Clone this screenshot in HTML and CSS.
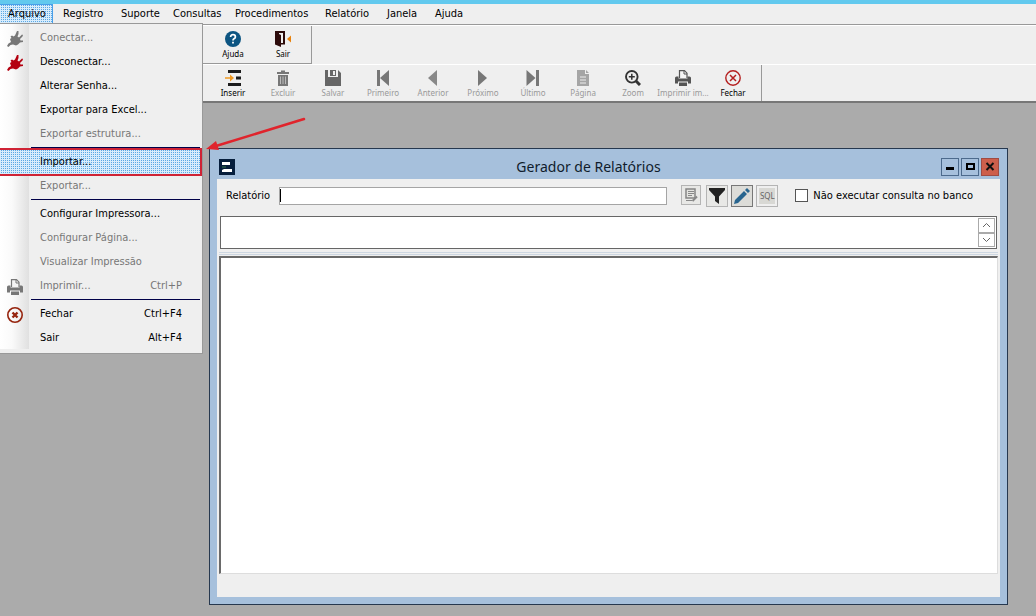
FILE: index.html
```html
<!DOCTYPE html>
<html lang="pt-BR">
<head>
<meta charset="utf-8">
<title>Gerador de Relatórios</title>
<link rel="stylesheet" href="styles.css">
</head>
<body>
<svg class="defs" aria-hidden="true">
  <symbol id="plug" viewBox="0 0 16 16"><path d="M0 15L1.500 12.500L4 11L3 8L4.500 7L3.500 5.500L5 4.500L6.500 5.500L8 4.500L10 0H11.500V3L10.500 5.500L12 6.500L15 3.500L16 4L15.500 5.500L13 8L13.500 9.500H16V11L13 11.500L11 13.500L9 14.500L6 13.500L3.500 14L1.500 16Z" fill="currentColor"/></symbol>
  <symbol id="printer" viewBox="0 0 16 16"><path d="M4.500 8V.7H9.500L12 3.200V8" fill="#f4f4f4" stroke="currentColor" stroke-width="1.200"/><path d="M9 1V4H12" fill="none" stroke="currentColor"/><path d="M0 8Q0 6.500 1.500 6.500H3.500V8.500H12.500V6.500H14.500Q16 6.500 16 8V13.500H13V11.500H3V13.500H0ZM4 12.500H12V16H4Z" fill="currentColor"/></symbol>
  <symbol id="close" viewBox="0 0 16 16"><circle cx="8" cy="8" r="7.200" fill="none" stroke="currentColor" stroke-width="1.400"/><path d="M5 5L11 11M11 5L5 11" stroke="currentColor" stroke-width="1.500"/></symbol>
  <symbol id="close-bold" viewBox="0 0 16 16"><circle cx="8" cy="8" r="7.200" fill="none" stroke="currentColor" stroke-width="1.600"/><path d="M5.500 5.500L10.500 10.500M10.500 5.500L5.500 10.500" stroke="currentColor" stroke-width="2.400"/></symbol>
</svg>

<div class="app">
  <div class="strip"></div>
  <nav class="menubar">
    <button class="menu active">Arquivo</button>
    <button class="menu">Registro</button>
    <button class="menu">Suporte</button>
    <button class="menu">Consultas</button>
    <button class="menu">Procedimentos</button>
    <button class="menu">Relatório</button>
    <button class="menu">Janela</button>
    <button class="menu">Ajuda</button>
  </nav>

  <div class="toolbar-row">
    <div class="toolbar boxed">
      <button class="tool"><svg viewBox="0 0 16 16"><circle cx="8" cy="8" r="8" fill="#0d5582"/><path d="M5.600 6Q5.600 3.700 8 3.700T10.400 6Q10.400 7 9 7.800Q8 8.400 8 9.600" fill="none" stroke="#fff" stroke-width="1.700"/><path d="M7.100 10.800H8.900V12.500H7.100Z" fill="#fff"/></svg><span>Ajuda</span></button>
      <button class="tool"><svg viewBox="0 0 16 16"><path d="M0 0H10V13.500H6V16L0 13.500Z" fill="#2c0b0b"/><path d="M4 2H8V12H6V4L4 3Z" fill="#efefef"/><path d="M16 4.500V11.500L12 8Z" fill="#e8820c"/></svg><span>Sair</span></button>
    </div>
  </div>
  <div class="toolbar-row">
    <div class="toolbar">
      <button class="tool"><svg viewBox="0 0 16 16"><path d="M3 0H16V3H3ZM11 6.500H16V9.500H11ZM3 13H16V16H3Z" fill="#1c1c1c"/><path d="M0 7.200H5V4.500L9 8L5 11.500V8.800H0Z" fill="#f09a24"/></svg><span>Inserir</span></button>
      <button class="tool" disabled><svg viewBox="0 0 16 16"><path d="M2 2H6V.5H10V2H14V4H2ZM3 5H13V16H3Z" fill="#777"/><path d="M5.500 6.500V14M8 6.500V14M10.500 6.500V14" stroke="#bbb" stroke-width="1"/></svg><span>Excluir</span></button>
      <button class="tool" disabled><svg viewBox="0 0 16 16"><path d="M0 0H3V7H13V0L16 3V16H0ZM5 0H11V6H5Z" fill="#666"/><path d="M8 1H10V5H8Z" fill="#eee"/></svg><span>Salvar</span></button>
      <button class="tool" disabled><svg viewBox="0 0 16 16"><path d="M2 0H5V16H2ZM14 0V16L5 8Z" fill="#777"/></svg><span>Primeiro</span></button>
      <button class="tool" disabled><svg viewBox="0 0 16 16"><path d="M12 0V16L3 8Z" fill="#888"/></svg><span>Anterior</span></button>
      <button class="tool" disabled><svg viewBox="0 0 16 16"><path d="M3 0V16L12 8Z" fill="#777"/></svg><span>Próximo</span></button>
      <button class="tool" disabled><svg viewBox="0 0 16 16"><path d="M1.500 0V16L10.500 8ZM11 0H14V16H11Z" fill="#777"/></svg><span>Último</span></button>
      <button class="tool" disabled><svg viewBox="0 0 16 16"><path d="M2 0H10V4H14V16H2ZM11 0L14 3H11Z" fill="#a5a5a5"/><path d="M5 7H11M5 10H11M5 13H11" stroke="#eee" stroke-width="1.200"/></svg><span>Página</span></button>
      <button class="tool" disabled><svg viewBox="0 0 16 16"><circle cx="6.800" cy="6.800" r="5.800" fill="none" stroke="#333" stroke-width="1.900"/><path d="M3.800 6.800H9.800M6.800 3.800V9.800" stroke="#333" stroke-width="1.500"/><path d="M11 11L15 15" stroke="#333" stroke-width="3"/></svg><span>Zoom</span></button>
      <button class="tool" disabled><svg class="dark"><use href="#printer"/></svg><span>Imprimir im...</span></button>
      <button class="tool"><svg class="red"><use href="#close"/></svg><span>Fechar</span></button>
    </div>
  </div>

  <main class="workspace"></main>

  <section class="window">
    <header class="titlebar">
      <svg class="logo" viewBox="0 0 16 16"><path d="M0 0H16V16H0Z" fill="#061e3c"/><path d="M3 3H11V6H3ZM5 10H13V13H3V11Z" fill="#fff"/><path d="M3 7H7V9H3Z" fill="#1c4a42"/></svg>
      <h1>Gerador de Relatórios</h1>
      <div class="winbtns">
        <button aria-label="Minimizar"><svg viewBox="0 0 16 16"><path d="M4 8H12V11H4Z"/></svg></button>
        <button aria-label="Maximizar"><svg viewBox="0 0 16 16"><path fill-rule="evenodd" d="M4 4H13V11H4ZM6 6V9H11V6Z"/></svg></button>
        <button class="shut" aria-label="Fechar janela"><svg viewBox="0 0 16 16"><path d="M4.500 4L11.500 11M11.500 4L4.500 11" stroke="#111" stroke-width="2"/></svg></button>
      </div>
    </header>
    <div class="client">
      <div class="query">
        <label class="name" for="report">Relatório</label>
        <div class="field"><input id="report" type="text"><i class="caret"></i></div>
        <div class="actions">
          <button class="small" aria-label="Editar lista"><svg viewBox="0 0 16 16"><path d="M3 2H12V11H3Z" fill="#e4e4e0" stroke="#858585" stroke-width="1.500"/><path d="M5 4.500H11M5 6.500H11M5 8.500H9M3 13.500H9" stroke="#888"/><path d="M9.500 14L14 9.500" stroke="#888" stroke-width="2"/></svg></button>
          <button aria-label="Filtrar"><svg viewBox="0 0 16 16"><path d="M0 0H16V2L10 8.500V16L6 13V8.500L0 2Z" fill="#222"/></svg></button>
          <button class="pressed" aria-label="Editar"><svg viewBox="0 0 16 16"><path d="M0 16L1 12L10 3L13 6L4 15ZM11 2L13 0L16 3L14 5Z" fill="#28658f"/></svg></button>
          <button class="sql">SQL</button>
        </div>
        <label class="check"><input type="checkbox">Não executar consulta no banco</label>
      </div>
      <div class="memo">
        <textarea aria-label="Consulta"></textarea>
        <div class="spin">
          <button aria-label="Subir"><svg viewBox="0 0 9 6"><path d="M1 5L4.500 1.500L8 5"/></svg></button>
          <button aria-label="Descer"><svg viewBox="0 0 9 6"><path d="M1 1L4.500 4.500L8 1"/></svg></button>
        </div>
      </div>
      <div class="splitter"></div>
      <div class="results"></div>
      <footer class="status"></footer>
    </div>
  </section>

  <div class="dropdown">
    <button class="item" disabled><svg><use href="#plug"/></svg><span>Conectar...</span></button>
    <button class="item"><svg class="crimson"><use href="#plug"/></svg><span>Desconectar...</span></button>
    <button class="item"><span>Alterar Senha...</span></button>
    <button class="item"><span>Exportar para Excel...</span></button>
    <button class="item" disabled><span>Exportar estrutura...</span></button>
    <hr>
    <button class="item selected"><span>Importar...</span></button>
    <button class="item" disabled><span>Exportar...</span></button>
    <hr>
    <button class="item"><span>Configurar Impressora...</span></button>
    <button class="item" disabled><span>Configurar Página...</span></button>
    <button class="item" disabled><span>Visualizar Impressão</span></button>
    <button class="item" disabled><svg><use href="#printer"/></svg><span>Imprimir...</span><kbd>Ctrl+P</kbd></button>
    <hr>
    <button class="item"><svg class="brick"><use href="#close-bold"/></svg><span>Fechar</span><kbd>Ctrl+F4</kbd></button>
    <button class="item"><span>Sair</span><kbd>Alt+F4</kbd></button>
  </div>

  <svg class="arrow" viewBox="0 0 100 36"><path d="M98 3L10 30" stroke="#e0242c" stroke-width="2.500" stroke-linecap="round"/><path d="M0 33L10 25L13 34Z" fill="#e0242c"/></svg>
</div>
</body>
</html>
```
FILE: styles.css
```css
* { box-sizing: border-box; }
body { margin: 0; font: 11px/16px "DejaVu Sans Condensed", "DejaVu Sans", sans-serif; color: #000; }
button { font: inherit; color: inherit; background: none; border: 0; padding: 0; margin: 0; }
.defs { position: absolute; width: 0; height: 0; }
.app { position: relative; display: flex; flex-direction: column; height: 100vh; overflow: hidden; background: #ababab; }
.strip { height: 4px; background: #62c9ee; }
.menubar { display: grid; grid-template-columns: 54px 58px 52px 62px 90px 62px 48px 46px; height: 21px; background: #efefef; border-bottom: 1px solid #999; }
.menu { padding-left: 9px; text-align: left; white-space: nowrap; }
.menu.active { padding-left: 8px; border: 1px solid #4a9fe8; border-left: 0; margin-right: 1px; }
.menu.active, .item.selected { background: conic-gradient(#5aa8e4 25%, #d8ecfc 0) 0 0 / 2px 2px; }

.toolbar-row { display: flex; height: 39px; background: #efefef; border-top: 1px solid #fff; }
.toolbar-row + .toolbar-row { border-bottom: 2px solid #777; }
.toolbar { display: flex; padding: 0 3px 0 208px; border-right: 1px solid #999; }
.boxed { border-bottom: 1px solid #999; }
.tool { width: 50px; display: flex; flex-direction: column; align-items: center; padding-top: 5px; font: 8px/14px "Noto Sans", sans-serif; white-space: nowrap; }
.tool svg { width: 16px; height: 16px; }
.tool:disabled { color: #999; }
.tool .dark { color: #555; }
.tool .red { color: #b41f1f; }
.workspace { flex: 1; }

.dropdown { position: absolute; left: 0; top: 23px; width: 203px; padding: 2px 1px 3px 0; border: 1px solid #999; border-left: 0; background: linear-gradient(90deg, #fff, #fafafa 12px, #e0e0e0 29px, transparent 29px) 0 0 / 100% 325px no-repeat #efefef; }
.item { position: relative; display: flex; align-items: center; justify-content: space-between; width: calc(100% - 1px); height: 24px; padding: 0 18px 0 40px; white-space: nowrap; }
.item:disabled { color: #777; }
.item svg { position: absolute; left: 7px; top: 5px; width: 16px; height: 16px; }
.item kbd { font: inherit; }
.item.selected { outline: 2px solid #cf2335; outline-offset: 0; }
.item .crimson { color: #b40010; }
.item .brick { color: #96240e; }
hr { height: 1px; margin: 1px 1px 2px 31px; border: 0; background: #000048; }
.arrow { position: absolute; left: 206px; top: 116px; width: 100px; height: 36px; }

.window { position: absolute; left: 209px; top: 148px; right: 28px; bottom: 11px; display: flex; flex-direction: column; padding: 0 7px 7px; border: 1px solid #26384f; background: #a6c0dc; }
.titlebar { display: grid; grid-template-columns: 1fr auto 1fr; align-items: center; height: 30px; padding: 6px 2px 0; }
.logo { width: 16px; height: 16px; }
h1 { margin: 0 40px 0 0; font: 14px/20px "Noto Sans", sans-serif; color: #101c2c; }
.winbtns { display: flex; justify-content: flex-end; gap: 2px; margin-right: -1px; }
.winbtns button { width: 18px; height: 18px; border: 1px solid #4c6a8c; }
.winbtns svg { display: block; width: 16px; height: 16px; }
.winbtns .shut { background: #cd5f4c; border-color: #a04c44; }
.client { flex: 1; display: flex; flex-direction: column; padding: 0 2px; background: #efefef; }
.query { display: flex; align-items: center; height: 37px; padding: 0 25px 4px 7px; }
.name { width: 53px; }
.field { position: relative; flex: 1; height: 18px; }
.field input { display: block; width: 100%; height: 18px; border: 1px solid #a5a5a5; padding: 0 3px; background: #fff; font: inherit; }
.caret { position: absolute; left: 1px; top: 2px; width: 1px; height: 13px; background: #000; }
.actions { display: flex; gap: 3px; margin-left: 14px; }
.actions button { width: 22px; height: 22px; border: 1px solid #b4b4b4; display: flex; align-items: center; justify-content: center; background: #e8e8e6; }
.actions svg { width: 16px; height: 16px; }
.actions .small { width: 20px; height: 20px; margin-right: 2px; }
.actions .pressed { border-color: #777; background: #dcdcd8; }
.actions .sql { font: 8px/14px "Noto Sans", sans-serif; color: #666; background: #d8d8d4; box-shadow: inset 0 0 0 2px #efefef; }
.check { display: flex; align-items: center; gap: 5px; margin-left: 17px; white-space: nowrap; }
.check input { appearance: none; width: 13px; height: 13px; margin: 0; border: 1px solid #555; background: #fff; }
.memo { display: flex; height: 33px; margin: 0 1px; padding: 1px; border: 1px solid #666; background: #fff; }
.memo textarea { flex: 1; border: 0; padding: 2px; resize: none; font: inherit; }
.spin { display: flex; flex-direction: column; width: 17px; }
.spin button { flex: 1; display: flex; align-items: center; justify-content: center; border: 1px solid #aaa; }
.spin svg { width: 9px; height: 6px; fill: none; stroke: #666; }
.splitter { height: 3px; margin: 3px 0 1px; border: 1px solid #cdd7e2; border-width: 1px 0; }
.results { flex: 1; background: #fff; border: 2px solid #6a6a6a; border-right: 1px solid #ddd; border-bottom: 1px solid #ddd; }
.status { height: 23px; }
```
